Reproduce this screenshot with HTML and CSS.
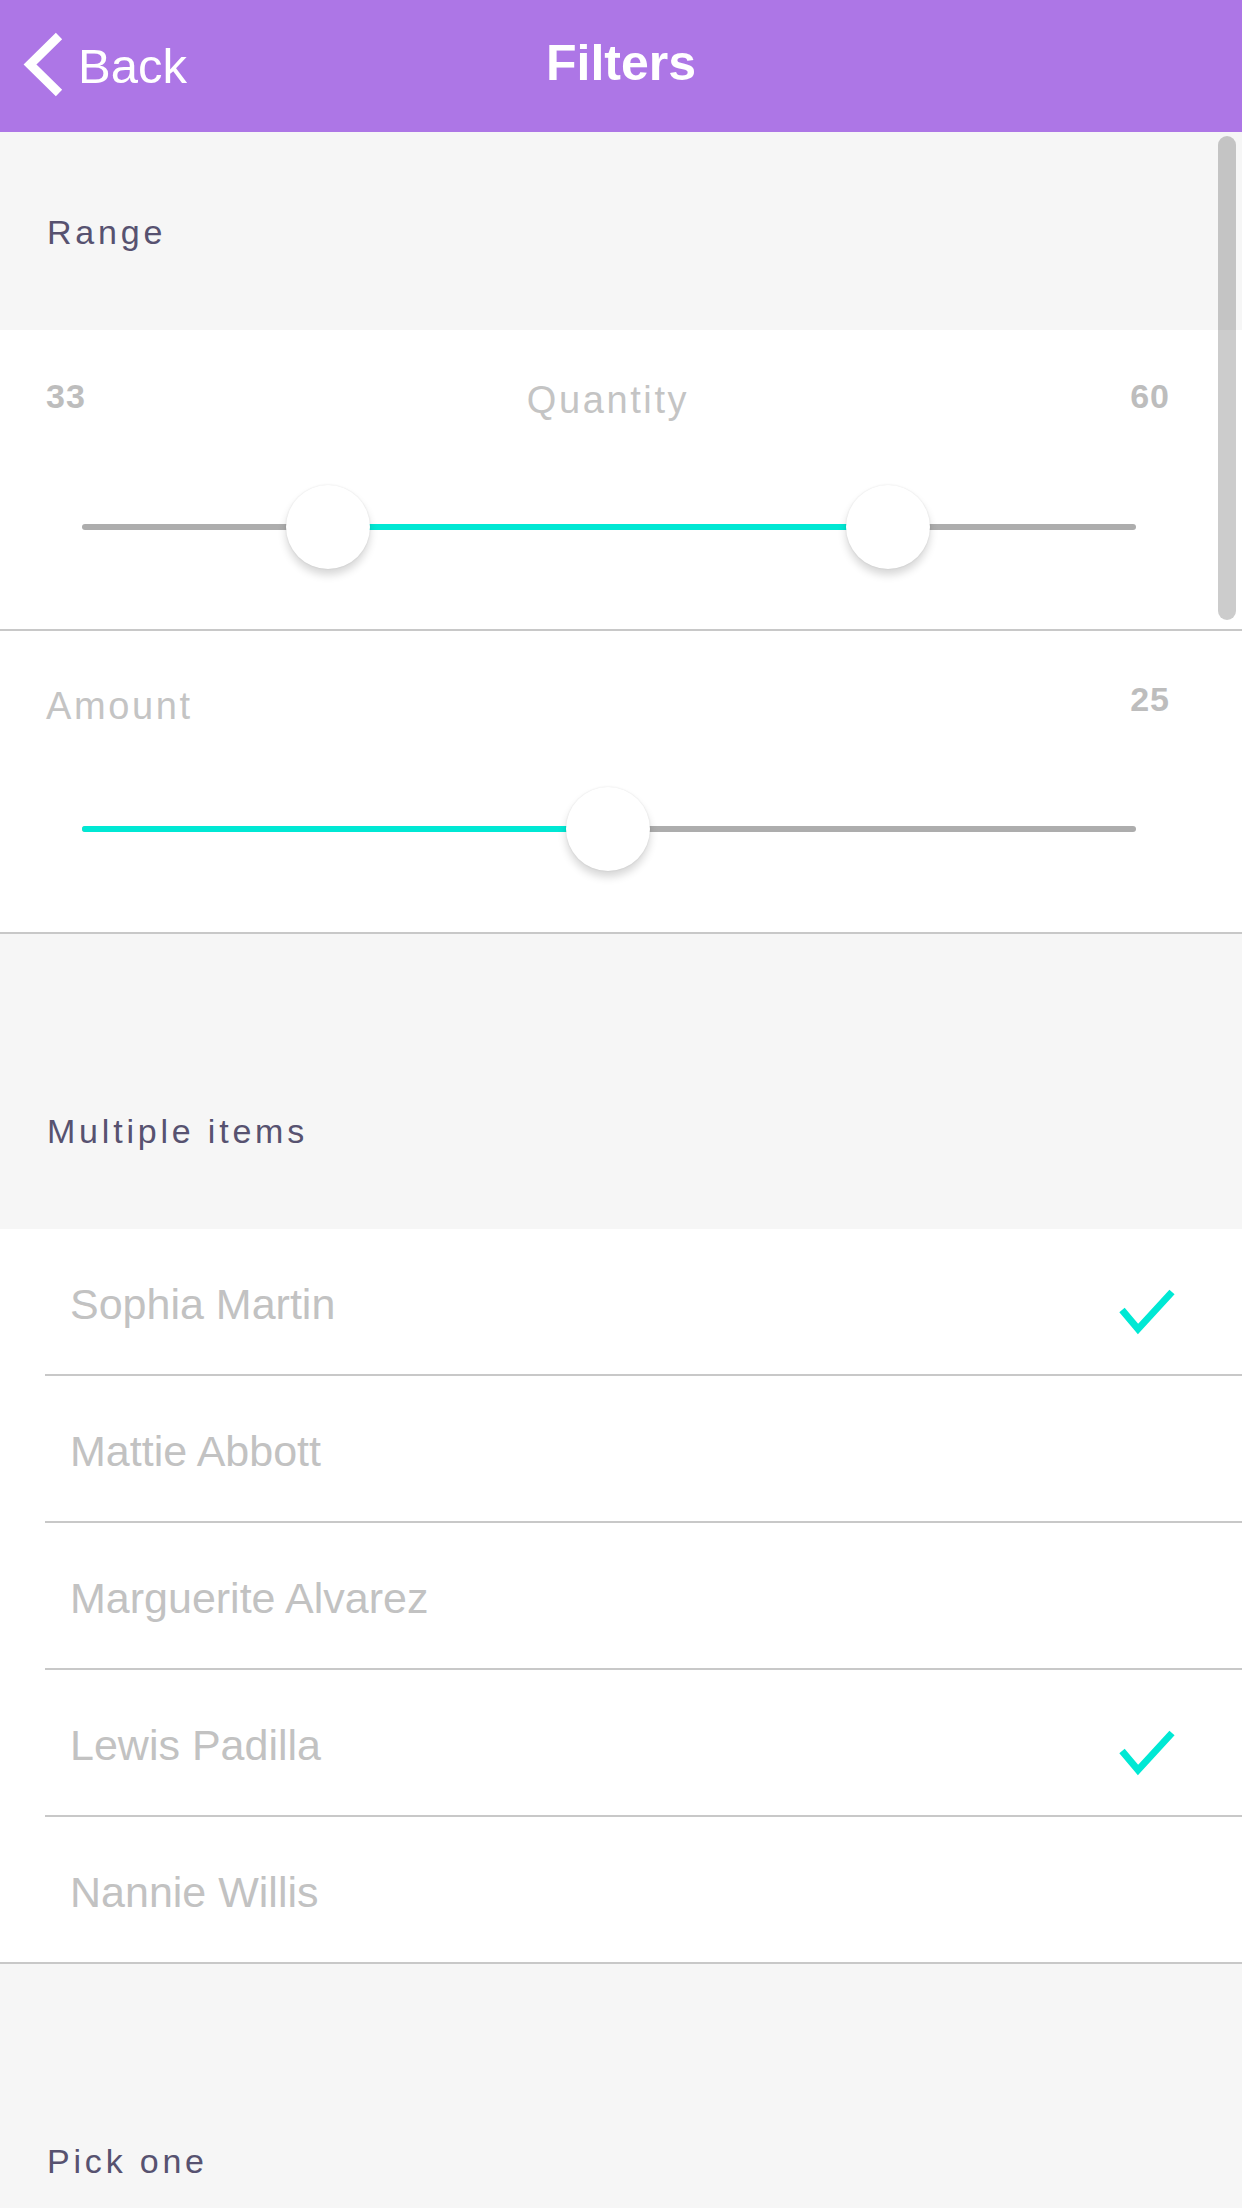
FILE: index.html
```html
<!DOCTYPE html>
<html lang="en">
<head>
<meta charset="utf-8">
<title>Filters</title>
<link rel="stylesheet" href="styles.css">
</head>
<body>
<div class="screen">
  <header class="topbar">
    <a class="back">
      <svg class="chev" width="46" height="72" viewBox="0 0 46 72"><polyline points="39,7 10,35.5 39,64" fill="none" stroke="#fff" stroke-width="9" stroke-linejoin="miter"/></svg>
      <span>Back</span>
    </a>
    <h1 class="title">Filters</h1>
    <span></span>
  </header>

  <main class="content">
    <section>
      <h2 class="section-title first">Range</h2>
      <div class="block">
        <div class="slider-row">
          <div class="labels">
            <span class="num">33</span>
            <span class="label">Quantity</span>
            <span class="num">60</span>
          </div>
          <div class="slider">
            <div class="track"></div>
            <div class="fill" style="left:23.34%;width:53.13%"></div>
            <div class="thumb" style="left:23.34%"></div>
            <div class="thumb" style="left:76.47%"></div>
          </div>
        </div>
        <div class="slider-row second">
          <div class="labels">
            <span class="label">Amount</span>
            <span class="num">25</span>
          </div>
          <div class="slider">
            <div class="track"></div>
            <div class="fill" style="left:0;width:49.9%"></div>
            <div class="thumb" style="left:49.9%"></div>
          </div>
        </div>
      </div>
    </section>

    <section>
      <h2 class="section-title">Multiple items</h2>
      <ul class="list">
        <li class="item"><span>Sophia Martin</span><svg class="check" width="62" height="48" viewBox="0 0 62 48"><polyline points="6,22 22,41 56,4" fill="none" stroke="#00e8d4" stroke-width="7" stroke-linejoin="miter"/></svg></li>
        <li class="item"><span>Mattie Abbott</span></li>
        <li class="item"><span>Marguerite Alvarez</span></li>
        <li class="item"><span>Lewis Padilla</span><svg class="check" width="62" height="48" viewBox="0 0 62 48"><polyline points="6,22 22,41 56,4" fill="none" stroke="#00e8d4" stroke-width="7" stroke-linejoin="miter"/></svg></li>
        <li class="item"><span>Nannie Willis</span></li>
      </ul>
    </section>

    <section>
      <h2 class="section-title">Pick one</h2>
    </section>
  </main>

  <div class="scrollbar"></div>
</div>
</body>
</html>
```

FILE: styles.css
```css
html, body {
  margin: 0;
  padding: 0;
}
body {
  background: #f6f6f6;
  font-family: "Liberation Sans", Arial, sans-serif;
  width: 1242px;
  height: 2208px;
  overflow: hidden;
}
.screen {
  position: relative;
  width: 1242px;
  height: 2208px;
  overflow: hidden;
}
.topbar {
  height: 132px;
  background: #ad76e6;
  display: grid;
  grid-template-columns: 1fr auto 1fr;
  align-items: center;
}
.back {
  display: flex;
  align-items: center;
  padding-left: 20px;
  color: #fff;
  font-size: 49px;
  line-height: 60px;
}
.chev {
  display: block;
  margin-right: 12px;
  margin-top: -2px;
}
.back span {
  margin-top: -1px;
}
.title {
  margin: -6px 0 0;
  color: #fff;
  font-size: 50px;
  font-weight: bold;
  line-height: 60px;
}
.section-title {
  margin: 0;
  padding: 177px 47px 78px;
  font-size: 34px;
  line-height: 40px;
  font-weight: normal;
  letter-spacing: 3.8px;
  color: #575270;
}
.section-title.first {
  padding-top: 80px;
}
.block {
  background: #fff;
}
.slider-row {
  padding-top: 46px;
  border-bottom: 2px solid #c8c8c8;
}
.slider-row.second {
  padding-top: 51px;
}
.labels {
  display: flex;
  justify-content: space-between;
  align-items: flex-start;
  padding: 0 72px 0 46px;
  height: 40px;
}
.num {
  font-size: 34px;
  line-height: 40px;
  font-weight: bold;
  letter-spacing: 1px;
  color: #bdbdbd;
}
.slider-row.second .num {
  margin-top: -3px;
}
.label {
  font-size: 38px;
  line-height: 40px;
  letter-spacing: 2.6px;
  color: #c4c4c4;
  padding-top: 4px;
}
.slider {
  position: relative;
  height: 84px;
  margin: 69px 106px 60px 82px;
  display: flex;
  align-items: center;
}
.slider-row.second .slider {
  margin-top: 65px;
  margin-bottom: 61px;
}
.track {
  flex: 1;
  height: 6px;
  border-radius: 3px;
  background: #adadad;
}
.fill {
  position: absolute;
  top: 39px;
  height: 6px;
  border-radius: 3px;
  background: #00e8d4;
}
.thumb {
  position: absolute;
  top: 0;
  width: 84px;
  height: 84px;
  margin-left: -42px;
  border-radius: 50%;
  background: #fff;
  box-shadow: 0 6px 8px rgba(0, 0, 0, 0.16), 0 0 2px rgba(0, 0, 0, 0.1);
}
.list {
  list-style: none;
  margin: 0;
  padding: 0;
  background: #fff;
  border-bottom: 2px solid #c8c8c8;
}
.item {
  margin-left: 45px;
  height: 145px;
  padding: 0 64px 0 25px;
  display: flex;
  align-items: center;
  justify-content: space-between;
  border-bottom: 2px solid #c8c8c8;
  font-size: 43px;
  color: #c2c2c2;
}
.item span {
  padding-top: 6px;
}
.item:last-child {
  border-bottom: none;
}
.check {
  display: block;
  margin-top: 20px;
}
.scrollbar {
  position: absolute;
  right: 6px;
  top: 136px;
  width: 18px;
  height: 484px;
  border-radius: 9px;
  background: rgba(0, 0, 0, 0.2);
}
```
